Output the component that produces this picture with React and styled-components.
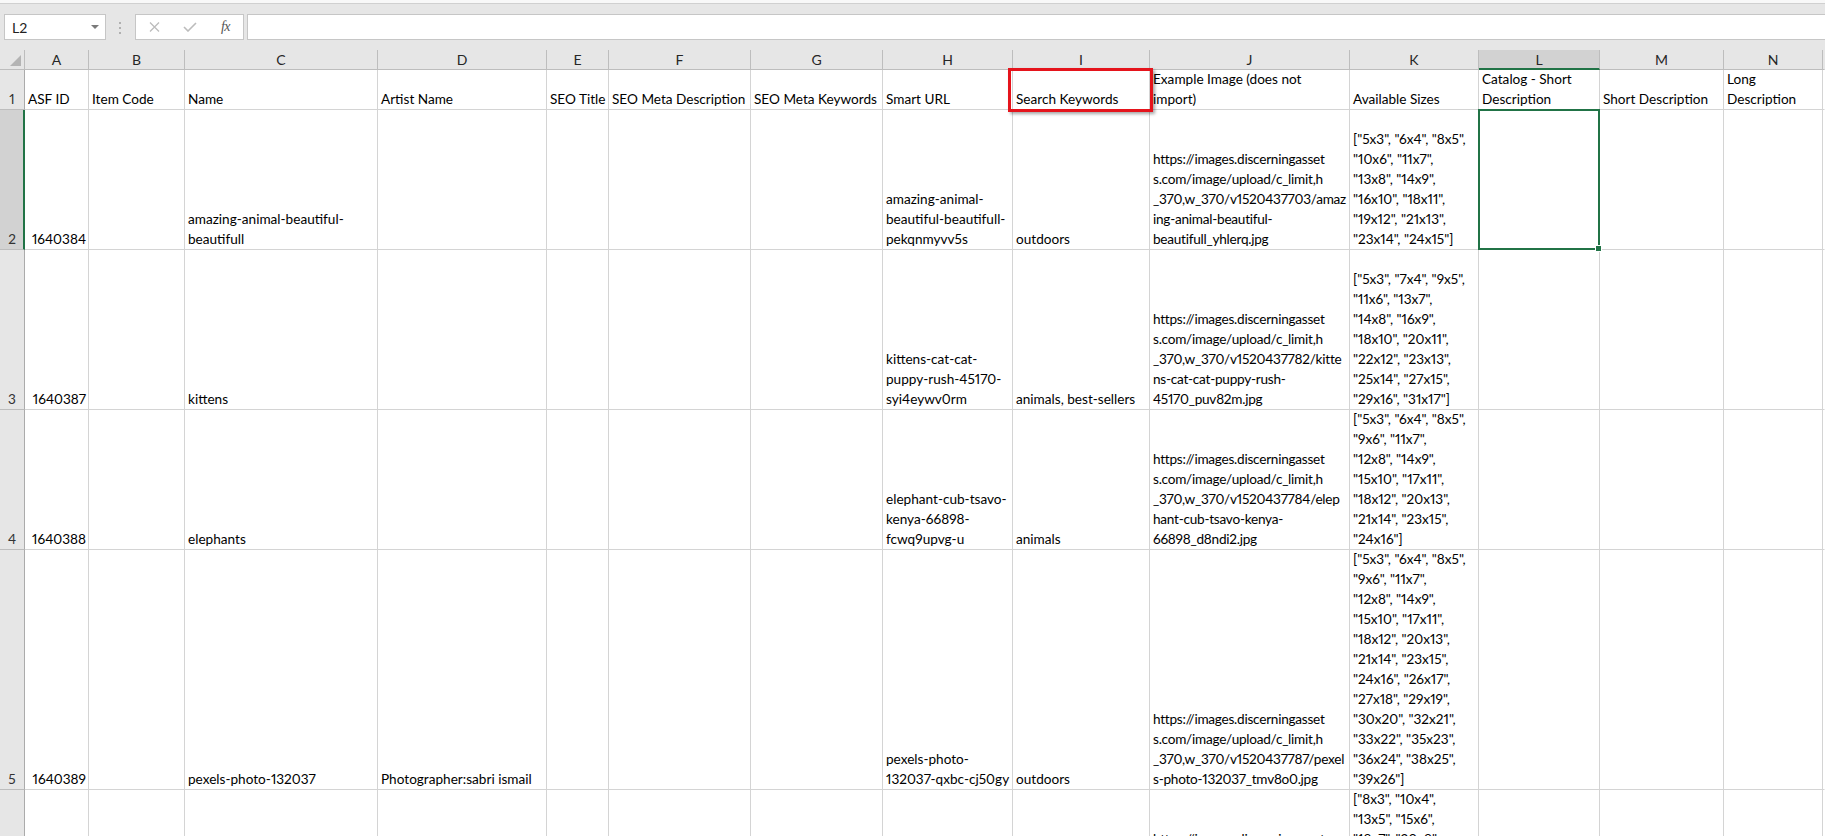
import React from 'react';
import styled, { createGlobalStyle } from 'styled-components';

const GlobalStyle = createGlobalStyle`
  html, body { margin: 0; padding: 0; background: #fff; overflow: hidden; }
  body { font-family: Lato, "Liberation Sans", sans-serif; }
  #root { width: 1825px; height: 836px; }
`;

const GRID = '#d4d4d4';
const GREEN = '#217346';
const HEAD_BG = '#e6e6e6';
const HEAD_SEL = '#d2d2d2';
const HEAD_LINE = '#bdbdbd';

const Page = styled.div`
  width: 1825px;
  height: 836px;
  overflow: hidden;
  display: flex;
  flex-direction: column;
  background: ${HEAD_BG};
`;

const TopStrip = styled.div`
  flex: none;
  height: 3px;
  background: #f8f8f8;
  border-bottom: 1px solid #d0d0d0;
`;

const FormulaBar = styled.div`
  flex: none;
  height: 46px;
  box-sizing: border-box;
  padding: 10px 0 0 4px;
  display: flex;
  align-items: flex-start;
  background: ${HEAD_BG};
`;

const NameBox = styled.div`
  box-sizing: border-box;
  width: 102px;
  height: 26px;
  background: #fff;
  border: 1px solid #c6c6c6;
  display: flex;
  align-items: center;
  justify-content: space-between;
  padding: 0 6px 0 7px;
  font-size: 14px;
  color: #222;
`;

const DropArrow = styled.span`
  width: 0;
  height: 0;
  border-left: 4px solid transparent;
  border-right: 4px solid transparent;
  border-top: 4px solid #7a7a7a;
`;

const Grip = styled.div`
  margin: 8px 14px 0 13px;
  display: flex;
  flex-direction: column;
  gap: 3px;
  & > span {
    width: 2px;
    height: 2px;
    background: #b0b0b0;
  }
`;

const ButtonBox = styled.div`
  box-sizing: border-box;
  width: 109px;
  height: 26px;
  background: #fff;
  border: 1px solid #c6c6c6;
  display: grid;
  grid-template-columns: 36px 36px 35px;
  align-items: center;
  justify-items: center;
`;

const Fx = styled.span`
  font-family: "Liberation Serif", serif;
  font-style: italic;
  font-size: 14px;
  color: #555;
  letter-spacing: -0.5px;
`;

const FormulaInput = styled.div`
  flex: 1;
  margin-left: 3px;
  height: 26px;
  box-sizing: border-box;
  background: #fff;
  border: 1px solid #c6c6c6;
  border-right: none;
`;

const Sheet = styled.div`
  flex: none;
  display: grid;
  grid-template-columns: 25px 64px 96px 193px 169px 62px 142px 132px 130px 137px 200px 129px 121px 124px 99px 1fr;
  grid-template-rows: 20px 40px 140px 160px 140px 240px 100px;
  background: #fff;
  font-size: 13.6px;
  line-height: 20px;
  color: #000;
  font-variant-numeric: proportional-nums;
`;

const Corner = styled.div`
  box-sizing: border-box;
  background: ${HEAD_BG};
  border-right: 1px solid ${HEAD_LINE};
  border-bottom: 1px solid ${HEAD_LINE};
  display: flex;
`;

const ColHead = styled.div`
  box-sizing: border-box;
  background: ${(p) => (p.$selected ? HEAD_SEL : HEAD_BG)};
  border-right: 1px solid ${(p) => (p.$filler ? 'transparent' : HEAD_LINE)};
  border-bottom: ${(p) => (p.$selected ? `2px solid ${GREEN}` : `1px solid ${HEAD_LINE}`)};
  display: flex;
  align-items: center;
  justify-content: center;
  font-size: 14px;
  color: #262626;
  padding-top: ${(p) => (p.$selected ? '1px' : '0')};
`;

const RowHead = styled.div`
  box-sizing: border-box;
  background: ${(p) => (p.$selected ? HEAD_SEL : HEAD_BG)};
  border-right: ${(p) => (p.$selected ? `2px solid ${GREEN}` : `1px solid #ababab`)};
  border-bottom: 1px solid ${HEAD_LINE};
  display: flex;
  align-items: flex-end;
  justify-content: center;
  color: #333;
  padding-left: ${(p) => (p.$selected ? '1px' : '0')};
  overflow: hidden;
`;

const Cell = styled.div`
  position: relative;
  box-sizing: border-box;
  border-right: 1px solid ${(p) => (p.$filler ? 'transparent' : GRID)};
  border-bottom: 1px solid ${GRID};
  min-width: 0;
`;

const CellText = styled.div`
  box-sizing: border-box;
  height: 100%;
  padding: 0 ${(p) => (p.$num ? '2px' : '3px')} 0 3px;
  display: flex;
  flex-direction: column;
  justify-content: flex-end;
  align-items: ${(p) => (p.$num ? 'flex-end' : 'flex-start')};
  white-space: nowrap;
  overflow: hidden;
  letter-spacing: ${(p) => (p.$tight ? '-0.25px' : 'normal')};
`;

const Line = styled.span`
  display: block;
  height: 20px;
  flex: none;
`;

const Selection = styled.div`
  position: absolute;
  left: -1px;
  top: -1px;
  right: -1px;
  bottom: -1px;
  border: 2px solid ${GREEN};
  pointer-events: none;
  z-index: 3;
  &::after {
    content: '';
    position: absolute;
    right: -4px;
    bottom: -4px;
    width: 5px;
    height: 5px;
    background: ${GREEN};
    border: 1px solid #fff;
  }
`;

const Callout = styled.div`
  position: absolute;
  left: -5px;
  top: -2px;
  width: 145px;
  height: 44px;
  box-sizing: border-box;
  border: 3px solid #e5141c;
  box-shadow: 2px 2px 3px rgba(0, 0, 0, 0.35);
  pointer-events: none;
  z-index: 4;
`;

const COLS = ['A', 'B', 'C', 'D', 'E', 'F', 'G', 'H', 'I', 'J', 'K', 'L', 'M', 'N'];
const TIGHT_COLS = ['J'];

const ROWS = [
  {
    n: '1',
    cells: {
      A: ['ASF ID'],
      B: ['Item Code'],
      C: ['Name'],
      D: ['Artist Name'],
      E: ['SEO Title'],
      F: ['SEO Meta Description'],
      G: ['SEO Meta Keywords'],
      H: ['Smart URL'],
      I: ['Search Keywords'],
      J: ['Example Image (does not', 'import)'],
      K: ['Available Sizes'],
      L: ['Catalog - Short', 'Description'],
      M: ['Short Description'],
      N: ['Long', 'Description'],
    },
  },
  {
    n: '2',
    cells: {
      A: ['1640384'],
      C: ['amazing-animal-beautiful-', 'beautifull'],
      H: ['amazing-animal-', 'beautiful-beautifull-', 'pekqnmyvv5s'],
      I: ['outdoors'],
      J: [
        'https://images.discerningasset',
        's.com/image/upload/c_limit,h',
        '_370,w_370/v1520437703/amaz',
        'ing-animal-beautiful-',
        'beautifull_yhlerq.jpg',
      ],
      K: [
        '["5x3", "6x4", "8x5",',
        '"10x6", "11x7",',
        '"13x8", "14x9",',
        '"16x10", "18x11",',
        '"19x12", "21x13",',
        '"23x14", "24x15"]',
      ],
    },
  },
  {
    n: '3',
    cells: {
      A: ['1640387'],
      C: ['kittens'],
      H: ['kittens-cat-cat-', 'puppy-rush-45170-', 'syi4eywv0rm'],
      I: ['animals, best-sellers'],
      J: [
        'https://images.discerningasset',
        's.com/image/upload/c_limit,h',
        '_370,w_370/v1520437782/kitte',
        'ns-cat-cat-puppy-rush-',
        '45170_puv82m.jpg',
      ],
      K: [
        '["5x3", "7x4", "9x5",',
        '"11x6", "13x7",',
        '"14x8", "16x9",',
        '"18x10", "20x11",',
        '"22x12", "23x13",',
        '"25x14", "27x15",',
        '"29x16", "31x17"]',
      ],
    },
  },
  {
    n: '4',
    cells: {
      A: ['1640388'],
      C: ['elephants'],
      H: ['elephant-cub-tsavo-', 'kenya-66898-', 'fcwq9upvg-u'],
      I: ['animals'],
      J: [
        'https://images.discerningasset',
        's.com/image/upload/c_limit,h',
        '_370,w_370/v1520437784/elep',
        'hant-cub-tsavo-kenya-',
        '66898_d8ndi2.jpg',
      ],
      K: [
        '["5x3", "6x4", "8x5",',
        '"9x6", "11x7",',
        '"12x8", "14x9",',
        '"15x10", "17x11",',
        '"18x12", "20x13",',
        '"21x14", "23x15",',
        '"24x16"]',
      ],
    },
  },
  {
    n: '5',
    cells: {
      A: ['1640389'],
      C: ['pexels-photo-132037'],
      D: ['Photographer:sabri ismail'],
      H: ['pexels-photo-', '132037-qxbc-cj50gy'],
      I: ['outdoors'],
      J: [
        'https://images.discerningasset',
        's.com/image/upload/c_limit,h',
        '_370,w_370/v1520437787/pexel',
        's-photo-132037_tmv8o0.jpg',
      ],
      K: [
        '["5x3", "6x4", "8x5",',
        '"9x6", "11x7",',
        '"12x8", "14x9",',
        '"15x10", "17x11",',
        '"18x12", "20x13",',
        '"21x14", "23x15",',
        '"24x16", "26x17",',
        '"27x18", "29x19",',
        '"30x20", "32x21",',
        '"33x22", "35x23",',
        '"36x24", "38x25",',
        '"39x26"]',
      ],
    },
  },
  {
    n: '6',
    cells: {
      J: ['https://images.discerningasset', 's.com/image/upload/c_limit,h', '_370,w_370/v1520437790/youn'],
      K: ['["8x3", "10x4",', '"13x5", "15x6",', '"18x7", "20x8",', '"23x9", "25x10",', '"28x11"]'],
    },
  },
];

const SEL_ROW = '2';
const SEL_COL = 'L';

function XIcon() {
  return (
    <svg width="11" height="10" viewBox="0 0 11 10">
      <path d="M1 0.5 L10 9.5 M10 0.5 L1 9.5" stroke="#bcbcbc" strokeWidth="1.3" fill="none" />
    </svg>
  );
}

function CheckIcon() {
  return (
    <svg width="14" height="10" viewBox="0 0 14 10">
      <path d="M1 5 L5 9 L13 1" stroke="#bcbcbc" strokeWidth="1.6" fill="none" />
    </svg>
  );
}

export default function App() {
  return (
    <Page>
      <GlobalStyle />
      <TopStrip />
      <FormulaBar>
        <NameBox>
          <span>L2</span>
          <DropArrow />
        </NameBox>
        <Grip>
          <span />
          <span />
          <span />
        </Grip>
        <ButtonBox>
          <XIcon />
          <CheckIcon />
          <Fx>fx</Fx>
        </ButtonBox>
        <FormulaInput />
      </FormulaBar>
      <Sheet>
        <Corner>
          <svg width="24" height="19" viewBox="0 0 24 19">
            <polygon points="10,16 21,16 21,5" fill="#b4b4b4" />
          </svg>
        </Corner>
        {COLS.map((c) => (
          <ColHead key={c} $selected={c === SEL_COL}>
            {c}
          </ColHead>
        ))}
        <ColHead $filler />
        {ROWS.map((r) => (
          <React.Fragment key={r.n}>
            <RowHead $selected={r.n === SEL_ROW}>{r.n === '6' ? '' : r.n}</RowHead>
            {COLS.map((c) => {
              const lines = r.cells[c] || [];
              const isNum = c === 'A' && r.n !== '1';
              const selected = r.n === SEL_ROW && c === SEL_COL;
              const callout = r.n === '1' && c === 'I';
              return (
                <Cell key={c}>
                  <CellText $num={isNum} $tight={TIGHT_COLS.includes(c) && r.n !== '1'}>
                    {lines.map((t, i) => (
                      <Line key={i}>{t}</Line>
                    ))}
                  </CellText>
                  {selected && <Selection />}
                  {callout && <Callout />}
                </Cell>
              );
            })}
            <Cell $filler />
          </React.Fragment>
        ))}
      </Sheet>
    </Page>
  );
}
